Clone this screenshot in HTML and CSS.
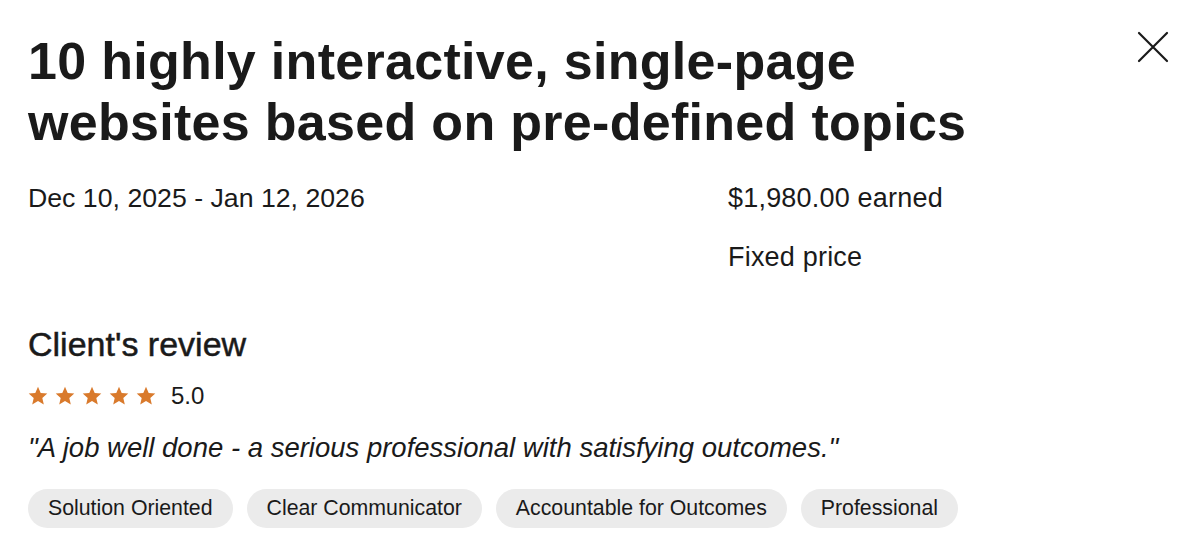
FILE: index.html
```html
<!DOCTYPE html>
<html lang="en">
<head>
<meta charset="utf-8">
<title>Contract details</title>
<link rel="stylesheet" href="styles.css">
</head>
<body>
<div class="panel">
  <header class="head">
    <h1 class="title">10 highly interactive, single-page websites based on pre-defined topics</h1>
    <button class="close" aria-label="Close">
      <svg width="32" height="32" viewBox="0 0 32 32" fill="none" stroke="#1a1a1a" stroke-width="2.2" stroke-linecap="round"><path d="M2 2 L30 30 M30 2 L2 30"/></svg>
    </button>
  </header>
  <div class="meta">
    <div class="dates">Dec 10, 2025 - Jan 12, 2026</div>
    <div class="money">
      <div>$1,980.00 earned</div>
      <div>Fixed price</div>
    </div>
  </div>
  <section class="review">
    <h2 class="review-title">Client's review</h2>
    <div class="rating">
      <span class="stars">
        <svg viewBox="0 0 20 20"><path d="M10 0.8l2.7 6.1 6.6.6-5 4.4 1.5 6.5L10 15l-5.8 3.4 1.5-6.5-5-4.4 6.6-.6z"/></svg>
        <svg viewBox="0 0 20 20"><path d="M10 0.8l2.7 6.1 6.6.6-5 4.4 1.5 6.5L10 15l-5.8 3.4 1.5-6.5-5-4.4 6.6-.6z"/></svg>
        <svg viewBox="0 0 20 20"><path d="M10 0.8l2.7 6.1 6.6.6-5 4.4 1.5 6.5L10 15l-5.8 3.4 1.5-6.5-5-4.4 6.6-.6z"/></svg>
        <svg viewBox="0 0 20 20"><path d="M10 0.8l2.7 6.1 6.6.6-5 4.4 1.5 6.5L10 15l-5.8 3.4 1.5-6.5-5-4.4 6.6-.6z"/></svg>
        <svg viewBox="0 0 20 20"><path d="M10 0.8l2.7 6.1 6.6.6-5 4.4 1.5 6.5L10 15l-5.8 3.4 1.5-6.5-5-4.4 6.6-.6z"/></svg>
      </span>
      <span class="score">5.0</span>
    </div>
    <p class="quote">"A job well done - a serious professional with satisfying outcomes."</p>
    <ul class="tags">
      <li>Solution Oriented</li>
      <li>Clear Communicator</li>
      <li>Accountable for Outcomes</li>
      <li>Professional</li>
    </ul>
  </section>
</div>
</body>
</html>
```

FILE: styles.css
```css
* { box-sizing: border-box; }
html, body { margin: 0; padding: 0; background: #fff; }
body {
  font-family: "Liberation Sans", Arial, sans-serif;
  color: #1a1a1a;
}
.panel {
  padding: 31px 28px 0 28px;
}
.head {
  display: flex;
  justify-content: space-between;
  align-items: flex-start;
}
.title {
  margin: 0;
  font-size: 52px;
  line-height: 61px;
  font-weight: 700;
  letter-spacing: 0.3px;
  max-width: 1010px;
}
.close {
  border: 0;
  background: none;
  padding: 0;
  margin: 0 2px 0 0;
  width: 32px;
  height: 32px;
  cursor: pointer;
}
.close svg { display: block; }
.meta {
  display: grid;
  grid-template-columns: 700px 1fr;
  margin-top: 29px;
  font-size: 27px;
  line-height: 32px;
}
.dates { font-size: 26.7px; }
.money {
  display: flex;
  flex-direction: column;
  gap: 27px;
  letter-spacing: 0.2px;
}
.review { margin-top: 51px; }
.review-title {
  margin: 0;
  font-size: 34px;
  line-height: 40px;
  font-weight: 400;
  -webkit-text-stroke: 0.5px #1a1a1a;
}
.rating {
  display: flex;
  align-items: center;
  gap: 15px;
  margin-top: 18px;
}
.stars { display: flex; gap: 7px; }
.stars svg { width: 20px; height: 20px; fill: #d97a2c; display: block; }
.score { font-size: 24px; line-height: 28px; }
.quote {
  margin: 22px 0 0;
  font-style: italic;
  font-size: 27.5px;
  line-height: 32px;
}
.tags {
  list-style: none;
  margin: 25px 0 0;
  padding: 0;
  display: flex;
  gap: 14px;
}
.tags li {
  background: #ebebeb;
  border-radius: 20px;
  height: 39px;
  padding: 0 20px;
  display: flex;
  align-items: center;
  font-size: 21.3px;
}
```
